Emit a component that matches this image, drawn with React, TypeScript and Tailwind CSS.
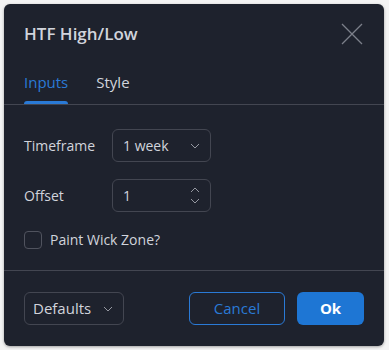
import React from "react";

function Chevron({ className = "" }: { className?: string }) {
  return (
    <svg width="10" height="6" viewBox="0 0 10 6" className={className} fill="none">
      <path d="M1 1l4 4 4-4" stroke="currentColor" strokeWidth="1" />
    </svg>
  );
}

export default function App() {
  return (
    <div
      className="h-[350px] w-[389px] bg-[#f4f4f4] p-[4px]"
      style={{ fontFamily: "'Open Sans', Roboto, sans-serif" }}
    >
      <div className="flex h-[342px] w-[380px] flex-col rounded-md bg-[#1e222d] text-[#d1d4dc] shadow-[0_1px_3px_rgba(0,0,0,0.35)]">
        {/* header */}
        <div className="flex h-[60px] shrink-0 items-center justify-between pl-5 pr-[21px]">
          <span className="text-[17px] font-semibold text-[#d1d4dc]">HTF High/Low</span>
          <svg width="22" height="22" viewBox="0 0 22 22" className="text-[#7c7f8a]">
            <path d="M1 1l20 20M21 1L1 21" stroke="currentColor" strokeWidth="1.3" />
          </svg>
        </div>

        {/* tabs */}
        <div className="flex h-[41px] shrink-0 items-end gap-7 border-b border-[#434651] px-5">
          <div className="flex h-full flex-col justify-between">
            <span className="pt-[7px] text-[15px] text-[#2a7ad6]">Inputs</span>
            <span className="h-[3px] w-full rounded-t-sm bg-[#2a7ad6]" />
          </div>
          <div className="flex h-full flex-col">
            <span className="pt-[7px] text-[15px] text-[#d1d4dc]">Style</span>
          </div>
        </div>

        {/* inputs */}
        <div className="flex flex-1 flex-col gap-[17px] border-b border-[#434651] px-5 pt-[24px]">
          <div className="flex items-center">
            <span className="w-[88px] text-[14px]">Timeframe</span>
            <div className="flex h-[33px] w-[99px] items-center justify-between rounded-md border border-[#434651] pl-[10px] pr-[10px] text-[14px]">
              <span>1 week</span>
              <Chevron className="text-[#9598a1]" />
            </div>
          </div>
          <div className="flex items-center">
            <span className="w-[88px] text-[14px]">Offset</span>
            <div className="flex h-[33px] w-[99px] items-center justify-between rounded-md border border-[#434651] pl-[10px] pr-[10px] text-[14px]">
              <span>1</span>
              <div className="flex flex-col gap-[5px] text-[#9598a1]">
                <Chevron className="rotate-180" />
                <Chevron />
              </div>
            </div>
          </div>
          <div className="flex items-center gap-2">
            <span className="h-[18px] w-[18px] rounded-[4px] border border-[#50535e]" />
            <span className="text-[14px]">Paint Wick Zone?</span>
          </div>
        </div>

        {/* footer */}
        <div className="flex h-[75px] shrink-0 items-center justify-between px-5">
          <div className="flex h-[33px] w-[100px] items-center justify-between rounded-md border border-[#434651] pl-[8px] pr-[10px] text-[15px]">
            <span>Defaults</span>
            <Chevron className="text-[#9598a1]" />
          </div>
          <div className="flex gap-3">
            <button className="h-[33px] w-[96px] rounded-md border border-[#2a7ad6] text-[15px] text-[#2a7ad6]">
              Cancel
            </button>
            <button className="h-[33px] w-[67px] rounded-md bg-[#1e76d4] text-[15px] font-bold text-white">
              Ok
            </button>
          </div>
        </div>
      </div>
    </div>
  );
}
